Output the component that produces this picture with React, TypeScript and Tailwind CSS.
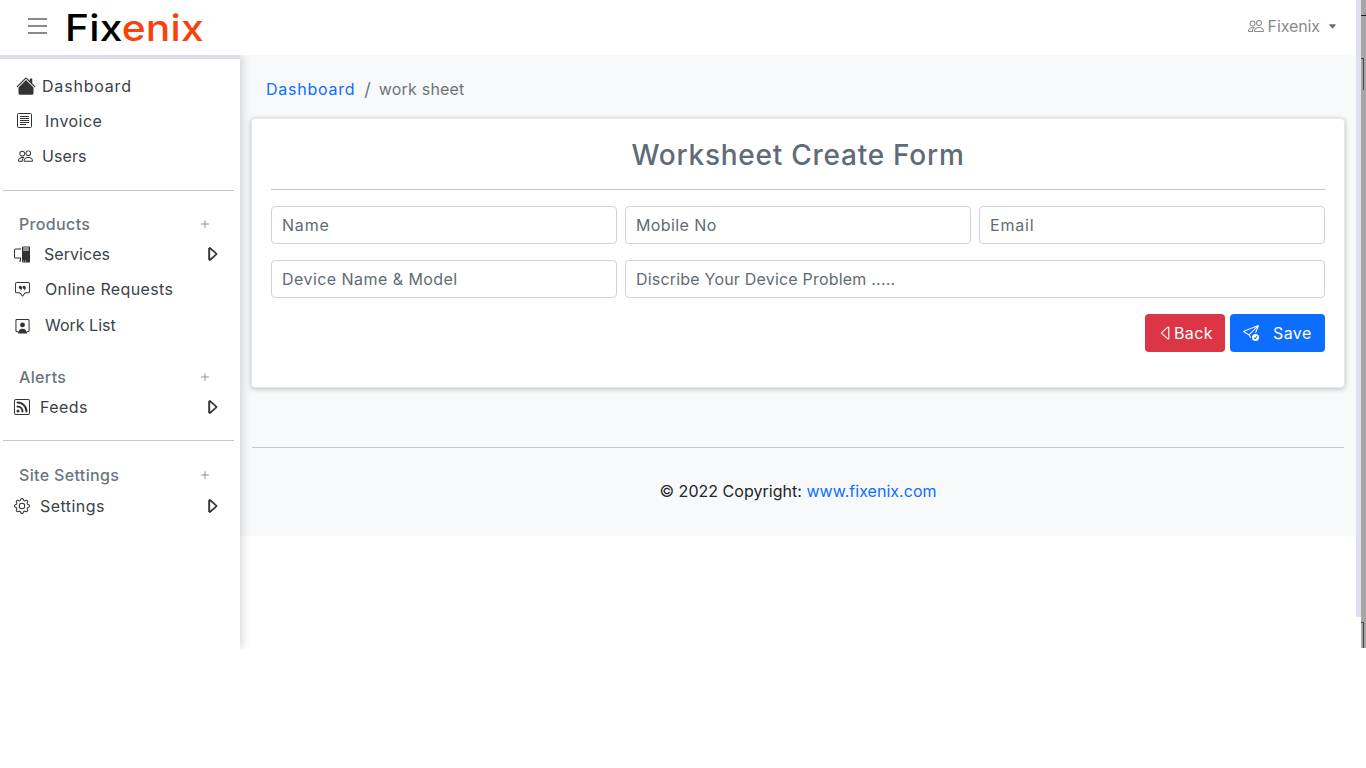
import React from 'react';
import {
  BsCaretLeft,
  BsCaretRight,
  BsCaretDownFill,
  BsChatSquareQuote,
  BsGear,
  BsHouseFill,
  BsPcDisplay,
  BsPeople,
  BsPlus,
  BsRss,
  BsSendCheck,
} from 'react-icons/bs';

const font = "font-['Inter','Noto_Sans',sans-serif]";

function InvoiceIcon() {
  return (
    <svg width="15" height="15" viewBox="0 0 15 15" fill="none" stroke="#333" className="-ml-[3px]">
      <rect x="0.5" y="0.5" width="14" height="14" rx="1" strokeWidth="1" />
      <path d="M3 3.5h9M3 5.5h9M3 7.5h9M3 9.5h9M3 11.5h6" strokeWidth="1" />
    </svg>
  );
}

function WorkListIcon() {
  return (
    <svg width="16" height="16" viewBox="0 0 16 16" fill="none" className="translate-y-[1px]">
      <path d="M3 14H2a1 1 0 0 1-1-1V2a1 1 0 0 1 1-1h12a1 1 0 0 1 1 1v11a1 1 0 0 1-1 1h-1" stroke="#333" strokeWidth="1.1" />
      <circle cx="8" cy="6.8" r="2.6" fill="#333" />
      <path d="M3.2 16c0-3.2 2.1-5 4.8-5s4.8 1.8 4.8 5z" fill="#333" />
    </svg>
  );
}

function NavLink({
  icon,
  label,
  textClass,
  height = 'h-[35px]',
  iconOffset = 'ml-[15px]',
  caret,
}: {
  icon: React.ReactNode;
  label: string;
  textClass: string;
  height?: string;
  iconOffset?: string;
  caret?: boolean;
}) {
  return (
    <div className={`flex items-center ${height} text-[#3b4248] text-[16px]`}>
      <span className={`w-[15px] flex justify-center shrink-0 ${iconOffset}`}>{icon}</span>
      <span className={textClass}>{label}</span>
      {caret && <BsCaretRight className="ml-auto mr-[19px] text-[18px] text-[#212529] stroke-[0.6px]" />}
    </div>
  );
}

function SectionLabel({ label, className }: { label: string; className: string }) {
  return (
    <div className={`flex items-center justify-between pl-[19px] pr-[27px] text-[#6c757d] text-[16px] font-medium tracking-[0.35px] ${className}`}>
      <span>{label}</span>
      <BsPlus className="text-[16px] text-[#8c949b]" />
    </div>
  );
}

function Field({ placeholder, className }: { placeholder: string; className: string }) {
  return (
    <input
      placeholder={placeholder}
      className={`h-[38px] w-full border border-[#ced4da] rounded-[4px] bg-white px-[10px] text-[16px] outline-none placeholder:text-[#626b73] ${className}`}
    />
  );
}

export default function App() {
  return (
    <div className={`${font} relative w-[1366px] h-[768px] overflow-hidden bg-white`}>
      {/* stray strip of the window behind the page */}
      <div className="absolute top-0 left-[1356px] w-[5px] h-[617px] bg-[#e0e0f0]" />
      <div className="absolute top-0 left-[1361px] w-[5px] h-[648px] bg-[#a6a6a6]" />
      <div className="absolute top-[15px] left-[1361px] w-[5px] h-[1px] bg-[#222]" />
      <div className="absolute top-[58px] left-[1361px] w-[3px] h-[32px] border-t border-r border-[#444]" />
      <div className="absolute top-[622px] left-[1361px] w-[3px] h-[26px] border-t border-r border-[#444]" />

      <div className="w-[1356px] h-[649px] flex flex-col">
        <header className="h-[57px] shrink-0 flex items-center bg-white border-b-2 border-[#f1f1f3] pb-[3px]">
          <div className="ml-[28px] w-[19px] flex flex-col gap-[5px]">
            <span className="h-[2px] bg-[#8a8a8a]" />
            <span className="h-[2px] bg-[#8a8a8a]" />
            <span className="h-[2px] bg-[#8a8a8a]" />
          </div>
          <div className="ml-[18px] text-[37px] leading-none font-medium tracking-[0.2px] mt-[2px] origin-left scale-x-[1.1]">
            <span className="text-black">Fix</span>
            <span className="text-[#f9420b]">enix</span>
          </div>
          <div className="ml-auto mr-[19px] flex items-center text-[16px] text-[#8a8a8a] tracking-[-0.1px]">
            <BsPeople className="text-[16px] mr-[4px]" />
            <span>Fixenix</span>
            <BsCaretDownFill className="ml-[8px] text-[9px] text-[#6c6c6c]" />
          </div>
        </header>

        <div className="flex flex-1 min-h-0 -mt-[2px] overflow-hidden">
          <aside className="w-[240px] shrink-0 bg-white border-t-4 border-[#dcdcec] shadow-[3px_0_8px_rgba(0,0,0,0.14)] z-10 pt-[9px]">
            <NavLink icon={<BsHouseFill className="text-[20px] shrink-0 text-[#333]" />} label="Dashboard" textClass="ml-[9px] tracking-[0.8px]" iconOffset="ml-[18px]" />
            <NavLink icon={<InvoiceIcon />} label="Invoice" textClass="ml-[12px] tracking-[0.45px]" iconOffset="ml-[18px]" />
            <NavLink icon={<BsPeople className="text-[16px] text-[#333]" />} label="Users" textClass="ml-[9px] tracking-[0.1px]" iconOffset="ml-[18px]" />
            <div className="mx-[3px] w-[231px] mt-[17px] border-t border-[#c4c8cc]" />
            <SectionLabel label="Products" className="h-[22px] mt-[22px]" />
            <NavLink icon={<BsPcDisplay className="text-[17px] text-[#333] -ml-[1px]" />} label="Services" textClass="ml-[14px] tracking-[0.05px]" height="h-[38px]" caret />
            <NavLink icon={<BsChatSquareQuote className="text-[15px] text-[#333]" />} label="Online Requests" textClass="ml-[15px] tracking-[0.38px]" height="h-[32px]" />
            <NavLink icon={<WorkListIcon />} label="Work List" textClass="ml-[15px] tracking-[0px]" height="h-[39px]" />
            <SectionLabel label="Alerts" className="h-[22px] mt-[22px]" />
            <NavLink icon={<BsRss className="text-[16px] text-[#333] -ml-[1px]" />} label="Feeds" textClass="ml-[10px] tracking-[0.45px]" height="h-[38px]" caret />
            <div className="mx-[3px] w-[231px] mt-[14px] border-t border-[#c4c8cc]" />
            <SectionLabel label="Site Settings" className="h-[22px] mt-[23px]" />
            <NavLink icon={<BsGear className="text-[16px] text-[#333] -ml-[1px]" />} label="Settings" textClass="ml-[10px] tracking-[0.45px]" height="h-[40px]" caret />
          </aside>

          <main className="flex-1 min-w-0 self-start h-[481px] bg-[#f8f9fa] px-[11px]">
            <nav className="flex items-center h-[24px] mt-[22px] pl-[15px] text-[16px]">
              <span className="text-[#0d6efd] tracking-[0.75px]">Dashboard</span>
              <span className="ml-[9px] mr-[8px] text-[#6c757d] text-[18px]">/</span>
              <span className="text-[#6c757d] tracking-[0.2px]">work sheet</span>
            </nav>

            <section className="mt-[17px] h-[270px] bg-white rounded-[4px] border border-[#e6e7e9] shadow-[0_1px_5px_rgba(0,0,0,0.25)] px-[19px] pt-[19px]">
              <h1 className="text-center text-[28px] leading-[34px] font-medium tracking-[0.75px] text-[#5f6c77]">
                Worksheet Create Form
              </h1>
              <div className="mt-[17px] border-t border-[#c4c8cc]" />
              <div className="mt-[16px] grid grid-cols-3 gap-x-[8px] gap-y-[16px]">
                <Field placeholder="Name" className="tracking-[0.8px]" />
                <Field placeholder="Mobile No" className="tracking-[0.4px]" />
                <Field placeholder="Email" className="tracking-[0.8px]" />
                <Field placeholder="Device Name & Model" className="tracking-[0.45px]" />
                <Field placeholder="Discribe Your Device Problem ....." className="col-span-2 tracking-[0.2px]" />
              </div>
              <div className="mt-[16px] flex justify-end gap-[5px] text-white text-[16px] tracking-[0.4px]">
                <button className="w-[80px] h-[38px] rounded-[4px] bg-[#dc3545] flex items-center pl-[12px]">
                  <BsCaretLeft className="text-[18px] -mr-[1px]" />
                  Back
                </button>
                <button className="w-[95px] h-[38px] rounded-[4px] bg-[#0d6efd] flex items-center pl-[13px]">
                  <BsSendCheck className="text-[16px] mr-[14px]" />
                  Save
                </button>
              </div>
            </section>

            <div className="mt-[59px] mx-[1px] border-t border-[#c4c8cc]" />
            <footer className="mt-[31px] text-center text-[16px] tracking-[0.03px] text-[#212529] leading-[24px]">
              © 2022 Copyright: <span className="text-[#0d6efd]">www.fixenix.com</span>
            </footer>
          </main>
        </div>
      </div>
    </div>
  );
}
